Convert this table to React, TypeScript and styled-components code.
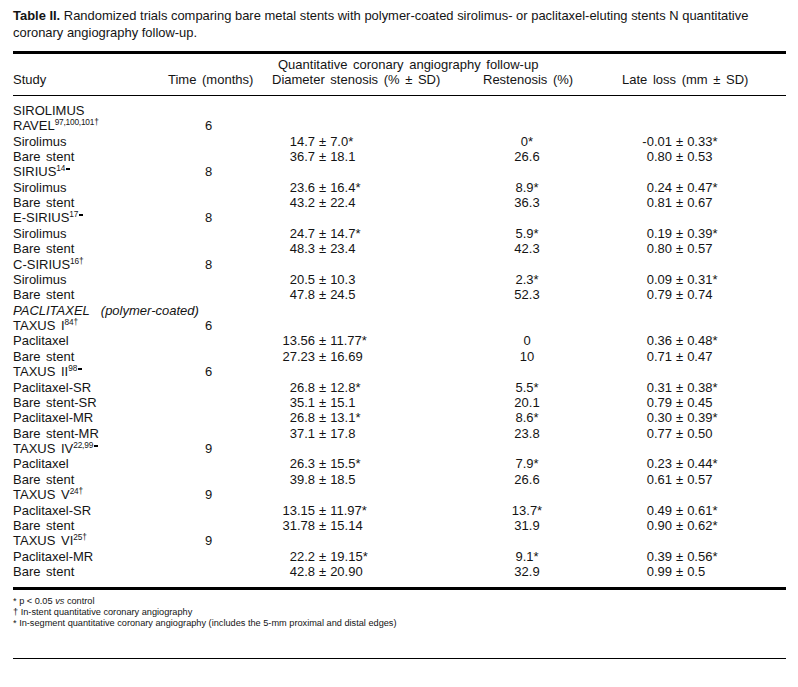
import { styled, createGlobalStyle } from "styled-components";

const GlobalStyle = createGlobalStyle`
    html, body {
        margin: 0;
        padding: 0;
        background: #ffffff;
    }
    body {
        font-family: "Liberation Sans", Arial, sans-serif;
        color: #141414;
    }
`;

const Page = styled.div`
    width: 773px;
    padding: 8px 0 0 13px;
    display: flex;
    flex-direction: column;
`;

const Caption = styled.p`
    margin: 0;
    font-size: 12.95px;
    line-height: 16.5px;
    white-space: nowrap;
    b {
        font-weight: bold;
    }
`;

const Rule = styled.div<{ $weight: number; $gap: number }>`
    height: ${({ $weight }) => $weight}px;
    background: #000;
    margin-top: ${({ $gap }) => $gap}px;
`;

const Row = styled.div`
    display: grid;
    grid-template-columns: 155px 104px 211px 139px 1fr;
    font-size: 13px;
    line-height: 15.37px;
    word-spacing: 2px;
    white-space: nowrap;
`;

const Head = styled.div`
    display: flex;
    flex-direction: column;
    padding-top: 3px;
    padding-bottom: 7px;
    div.span {
        font-size: 13px;
        line-height: 15.4px;
        word-spacing: 2px;
        margin-left: 265px;
    }
`;

const Body = styled.div`
    display: flex;
    flex-direction: column;
    padding-top: 7px;
    padding-bottom: 8px;
`;

const Label = styled.span<{ $italic?: boolean }>`
    font-style: ${({ $italic }) => ($italic ? "italic" : "normal")};
    white-space: pre;
`;

const Time = styled.span`
    padding-left: 37px;
`;

const Sup = styled.sup`
    font-size: 8.3px;
    letter-spacing: -0.2px;
    word-spacing: 0;
    vertical-align: 5px;
    line-height: 0;
`;

const Bar = styled.span`
    display: inline-block;
    width: 4px;
    height: 2px;
    background: #000;
    margin-left: 1px;
    vertical-align: 1px;
`;

const Pm = styled.span<{ $lead: number }>`
    display: flex;
    word-spacing: 0;
    span.a {
        width: ${({ $lead }) => $lead}px;
        text-align: right;
    }
    span.pm {
        padding: 0 4px;
    }
`;

const Rest = styled.span`
    display: block;
    width: 88px;
    text-align: center;
`;

const Notes = styled.div`
    display: flex;
    flex-direction: column;
    padding-top: 6px;
    padding-bottom: 30px;
    font-size: 9.2px;
    line-height: 10.6px;
    i {
        font-style: italic;
    }
`;

type Mark = "dagger" | "bar";

type Line =
    | { kind: "group"; name: string; italic?: boolean }
    | { kind: "trial"; name: string; refs: string; mark: Mark; months: number }
    | { kind: "arm"; name: string; ds: [string, string]; rs: string; ll: [string, string] };

const lines: Line[] = [
    { kind: "group", name: "SIROLIMUS" },
    { kind: "trial", name: "RAVEL", refs: "97,100,101", mark: "dagger", months: 6 },
    { kind: "arm", name: "Sirolimus", ds: ["14.7", "7.0*"], rs: "0*", ll: ["-0.01", "0.33*"] },
    { kind: "arm", name: "Bare stent", ds: ["36.7", "18.1"], rs: "26.6", ll: ["0.80", "0.53"] },
    { kind: "trial", name: "SIRIUS", refs: "14", mark: "bar", months: 8 },
    { kind: "arm", name: "Sirolimus", ds: ["23.6", "16.4*"], rs: "8.9*", ll: ["0.24", "0.47*"] },
    { kind: "arm", name: "Bare stent", ds: ["43.2", "22.4"], rs: "36.3", ll: ["0.81", "0.67"] },
    { kind: "trial", name: "E-SIRIUS", refs: "17", mark: "bar", months: 8 },
    { kind: "arm", name: "Sirolimus", ds: ["24.7", "14.7*"], rs: "5.9*", ll: ["0.19", "0.39*"] },
    { kind: "arm", name: "Bare stent", ds: ["48.3", "23.4"], rs: "42.3", ll: ["0.80", "0.57"] },
    { kind: "trial", name: "C-SIRIUS", refs: "16", mark: "dagger", months: 8 },
    { kind: "arm", name: "Sirolimus", ds: ["20.5", "10.3"], rs: "2.3*", ll: ["0.09", "0.31*"] },
    { kind: "arm", name: "Bare stent", ds: ["47.8", "24.5"], rs: "52.3", ll: ["0.79", "0.74"] },
    { kind: "group", name: "PACLITAXEL  (polymer-coated)", italic: true },
    { kind: "trial", name: "TAXUS I", refs: "84", mark: "dagger", months: 6 },
    { kind: "arm", name: "Paclitaxel", ds: ["13.56", "11.77*"], rs: "0", ll: ["0.36", "0.48*"] },
    { kind: "arm", name: "Bare stent", ds: ["27.23", "16.69"], rs: "10", ll: ["0.71", "0.47"] },
    { kind: "trial", name: "TAXUS II", refs: "98", mark: "bar", months: 6 },
    { kind: "arm", name: "Paclitaxel-SR", ds: ["26.8", "12.8*"], rs: "5.5*", ll: ["0.31", "0.38*"] },
    { kind: "arm", name: "Bare stent-SR", ds: ["35.1", "15.1"], rs: "20.1", ll: ["0.79", "0.45"] },
    { kind: "arm", name: "Paclitaxel-MR", ds: ["26.8", "13.1*"], rs: "8.6*", ll: ["0.30", "0.39*"] },
    { kind: "arm", name: "Bare stent-MR", ds: ["37.1", "17.8"], rs: "23.8", ll: ["0.77", "0.50"] },
    { kind: "trial", name: "TAXUS IV", refs: "22,99", mark: "bar", months: 9 },
    { kind: "arm", name: "Paclitaxel", ds: ["26.3", "15.5*"], rs: "7.9*", ll: ["0.23", "0.44*"] },
    { kind: "arm", name: "Bare stent", ds: ["39.8", "18.5"], rs: "26.6", ll: ["0.61", "0.57"] },
    { kind: "trial", name: "TAXUS V", refs: "24", mark: "dagger", months: 9 },
    { kind: "arm", name: "Paclitaxel-SR", ds: ["13.15", "11.97*"], rs: "13.7*", ll: ["0.49", "0.61*"] },
    { kind: "arm", name: "Bare stent", ds: ["31.78", "15.14"], rs: "31.9", ll: ["0.90", "0.62*"] },
    { kind: "trial", name: "TAXUS VI", refs: "25", mark: "dagger", months: 9 },
    { kind: "arm", name: "Paclitaxel-MR", ds: ["22.2", "19.15*"], rs: "9.1*", ll: ["0.39", "0.56*"] },
    { kind: "arm", name: "Bare stent", ds: ["42.8", "20.90"], rs: "32.9", ll: ["0.99", "0.5"] },
];

const Value = ({ pair, lead }: { pair: [string, string]; lead: number }) => (
    <Pm $lead={lead}>
        <span className="a">{pair[0]}</span>
        <span className="pm">±</span>
        <span>{pair[1]}</span>
    </Pm>
);

const TableRow = ({ line }: { line: Line }) => {
    if (line.kind === "group") {
        return (
            <Row>
                <Label $italic={line.italic}>{line.name}</Label>
            </Row>
        );
    }
    if (line.kind === "trial") {
        return (
            <Row>
                <Label>
                    {line.name}
                    <Sup>
                        {line.refs}
                        {line.mark === "dagger" ? "†" : <Bar />}
                    </Sup>
                </Label>
                <Time>{line.months}</Time>
            </Row>
        );
    }
    return (
        <Row>
            <Label>{line.name}</Label>
            <span />
            <Value pair={line.ds} lead={43} />
            <Rest>{line.rs}</Rest>
            <Value pair={line.ll} lead={50} />
        </Row>
    );
};

export default function App() {
    return (
        <Page>
            <GlobalStyle />
            <Caption>
                <b>Table II.</b> Randomized trials comparing bare metal stents with polymer-coated sirolimus- or
                paclitaxel-eluting stents N quantitative
                <br />
                coronary angiography follow-up.
            </Caption>
            <Rule $weight={3} $gap={10} />
            <Head>
                <div className="span">Quantitative coronary angiography follow-up</div>
                <Row>
                    <span>Study</span>
                    <span>Time (months)</span>
                    <span>Diameter stenosis (% ± SD)</span>
                    <span>Restenosis (%)</span>
                    <span>Late loss (mm ± SD)</span>
                </Row>
            </Head>
            <Rule $weight={1} $gap={0} />
            <Body>
                {lines.map((line, i) => (
                    <TableRow key={i} line={line} />
                ))}
            </Body>
            <Rule $weight={3} $gap={0} />
            <Notes>
                <span>* p &lt; 0.05 <i>vs</i> control</span>
                <span>† In-stent quantitative coronary angiography</span>
                <span>* In-segment quantitative coronary angiography (includes the 5-mm proximal and distal edges)</span>
            </Notes>
            <Rule $weight={1} $gap={0} />
        </Page>
    );
}
